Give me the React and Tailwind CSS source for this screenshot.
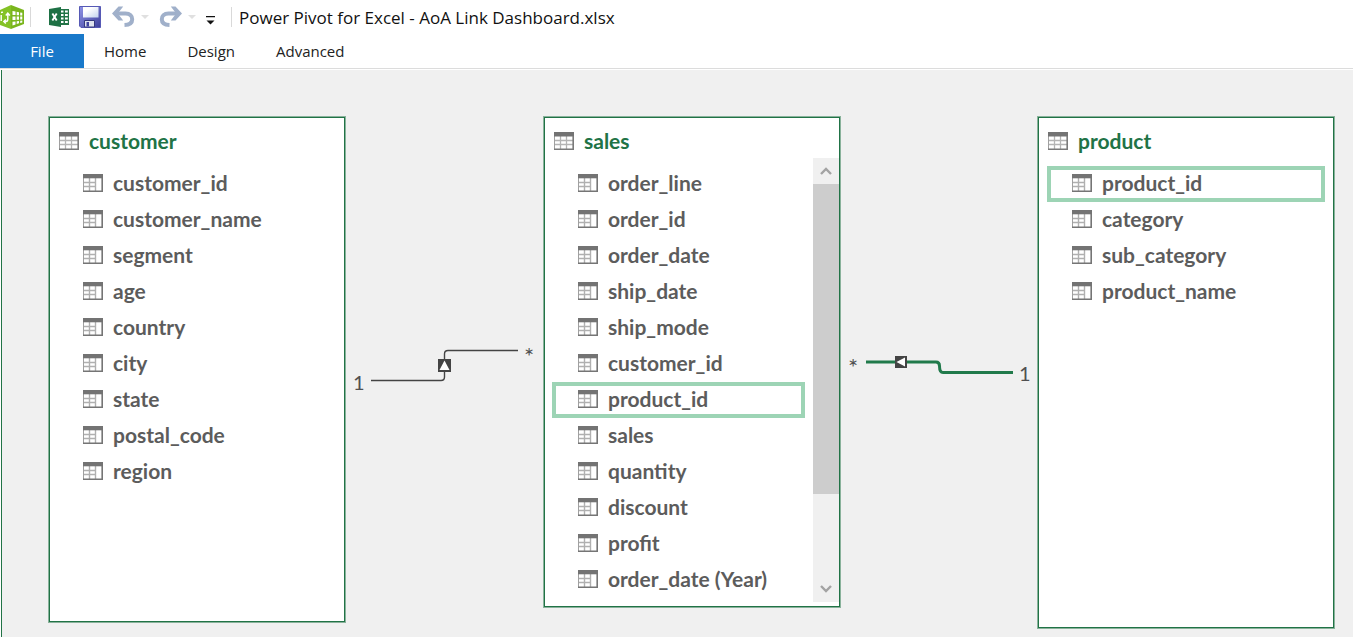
import React from 'react';

const tables = [
  {
    name: 'customer',
    box: 'left-[49px] h-[505px]',
    fields: ['customer_id', 'customer_name', 'segment', 'age', 'country', 'city', 'state', 'postal_code', 'region'],
  },
  {
    name: 'sales',
    box: 'left-[544px] h-[490px]',
    scroll: true,
    selected: 'product_id',
    fields: ['order_line', 'order_id', 'order_date', 'ship_date', 'ship_mode', 'customer_id', 'product_id', 'sales', 'quantity', 'discount', 'profit', 'order_date (Year)'],
  },
  {
    name: 'product',
    box: 'left-[1038px] h-[511px]',
    selected: 'product_id',
    fields: ['product_id', 'category', 'sub_category', 'product_name'],
  },
];

function TableIcon() {
  return (
    <svg width="20" height="18" viewBox="0 0 20 18" className="shrink-0" aria-hidden="true">
      <rect x="0.5" y="0.5" width="19" height="17" fill="#fff" stroke="#a0a0a0" />
      <path d="M1 8.5H19M1 12.5H19M6.5 4V17M12.5 4V17" stroke="#b4b4b4" strokeWidth="1.3" fill="none" />
      <path d="M0 0H20V4.5H0Z" fill="#737373" />
      <path d="M0 17.2H19.2V4" stroke="#7a7a7a" strokeWidth="1.6" fill="none" />
    </svg>
  );
}

function ColumnIcon() {
  return (
    <svg width="20" height="18" viewBox="0 0 20 18" className="shrink-0" aria-hidden="true">
      <rect x="0.5" y="0.5" width="19" height="17" fill="#fff" stroke="#a0a0a0" />
      <path d="M1 8.5H13M1 12.5H13M6.5 4V17M12.5 4V17" stroke="#b0b0b0" strokeWidth="1.4" fill="none" />
      <path d="M0 0H20V4.3H0Z" fill="#737373" />
      <path d="M0 17.2H19.2V4" stroke="#757575" strokeWidth="1.6" fill="none" />
    </svg>
  );
}

function Chevron({ d }) {
  return (
    <svg width="12" height="8" viewBox="0 0 12 8" fill="none" stroke="#a3a3a3" strokeWidth="2.4" aria-hidden="true">
      <path d={d} />
    </svg>
  );
}

function ScrollBar() {
  return (
    <div className="absolute right-0 top-10 bottom-1 flex w-[26px] flex-col bg-[#f0f0f0]">
      <button aria-label="Scroll up" className="flex h-[26px] items-center justify-center"><Chevron d="M1 7L6 2L11 7" /></button>
      <div className="h-[310px] bg-[#cdcdcd]" />
      <div className="grow" />
      <button aria-label="Scroll down" className="flex h-[26px] items-center justify-center"><Chevron d="M1 1L6 6L11 1" /></button>
    </div>
  );
}

function TableCard({ table }) {
  return (
    <section className={`absolute top-[47px] w-[296px] border border-[#217346] bg-white ring-1 ring-[#217346]/50 ${table.box}`}>
      <h2 className="flex h-12 items-center gap-2.5 pb-0.5 pl-[9px] text-[21px] leading-7 font-bold text-[#217346]">
        <TableIcon />
        {table.name}
      </h2>
      <ul className={table.scroll ? 'ml-[7px] mr-[34px]' : 'mx-2'}>
        {table.fields.map((f) => (
          <li
            key={f}
            className={`flex h-9 items-center gap-2.5 border-4 pb-0.5 text-[21px] leading-7 font-bold text-[#5c5c5c] ${table.scroll ? 'pl-[22px]' : 'pl-[21px]'} ${f === table.selected ? 'border-[#9dd4b5]' : 'border-transparent'}`}
          >
            <ColumnIcon />
            <span className="whitespace-nowrap">{f}</span>
          </li>
        ))}
      </ul>
      {table.scroll && <ScrollBar />}
    </section>
  );
}

function PivotLogo() {
  return (
    <svg width="24" height="24" viewBox="0 0 24 24" aria-hidden="true">
      <path d="M0 5L11 0V24L0 20Z" fill="#84c225" />
      <path d="M11 0L24 5V19L11 24Z" fill="#7ab51d" />
      <path d="M12.5 6L15.5 6.5V10H12.5ZM16.7 6.7L19 7.2V10.3H16.7ZM20.2 7.4L22.3 7.8V10.5H20.2ZM12.5 11.5H15.5V15H12.5ZM16.7 11.5H19V14.7H16.7ZM20.2 11.6H22.3V14.4H20.2ZM12.5 16.7L15.5 16.4V19.5L12.5 20.5ZM16.7 16.2L19 16V18.3L16.7 19ZM20.2 15.8L22.3 15.6V17.4L20.2 18Z" fill="#fff" />
      <path d="M1.2 10V16M1 7.5L3 7.1" stroke="#fff" strokeWidth="1.4" />
      <path d="M4 16.5H6Q7.8 16.5 7.8 14V9M5.8 10.5L7.8 8L9.8 10.5M5.8 14.5L3.8 16.5L5.8 18.5" stroke="#fff" strokeWidth="1.4" fill="none" />
    </svg>
  );
}

function ExcelLogo() {
  return (
    <svg width="21" height="20" viewBox="0 0 21 20" aria-hidden="true">
      <path d="M11 2H20V18H11Z" fill="#217346" />
      <path d="M12 3.5H14.5V5.5H12ZM16 3.5H18.8V5.5H16ZM12 7H14.5V9H12ZM16 7H18.8V9H16ZM12 10.5H14.5V12.5H12ZM16 10.5H18.8V12.5H16ZM12 14H14.5V16H12ZM16 14H18.8V16H16Z" fill="#fff" />
      <path d="M0 2L12 0V20L0 18Z" fill="#1e7145" />
      <path d="M3.4 6.5L7.7 13.5M7.7 6.5L3.4 13.5" stroke="#fff" strokeWidth="1.9" />
    </svg>
  );
}

function SaveIcon() {
  return (
    <svg width="23" height="23" viewBox="0 0 23 23" aria-hidden="true">
      <defs>
        <linearGradient id="disk" x1="0" y1="0" x2="1" y2="1">
          <stop offset="0" stopColor="#8f93e6" />
          <stop offset="1" stopColor="#3c3f9a" />
        </linearGradient>
        <linearGradient id="label" x1="0" y1="0" x2="1" y2="1">
          <stop offset="0.3" stopColor="#fff" />
          <stop offset="1" stopColor="#c3d3ee" />
        </linearGradient>
      </defs>
      <path d="M0.5 0.5H21.5V21.5H2L0.5 20Z" fill="url(#disk)" stroke="#5659b5" />
      <path d="M4 1H19.5V11.5H4Z" fill="url(#label)" />
      <path d="M5.5 14.5H15.5V21H5.5Z" fill="#dfe3ee" stroke="#34387e" />
      <path d="M7.5 16H10V20.500H7.5Z" fill="#4145a0" />
    </svg>
  );
}

function UndoArrow({ flip }) {
  return (
    <svg width="23" height="22" viewBox="0 0 23 22" className={flip ? '-scale-x-100' : ''} aria-hidden="true">
      <path d="M3 7.5H13.5C18 7.500 20.200 10.200 20.200 13.200C20.200 16.500 17.500 18.800 12.500 19" stroke="#a0b0ca" strokeWidth="4" fill="none" />
      <path d="M0 7.500L6.500 0.500H11.200L5.800 7.500L11.200 14.500H6.500Z" fill="#a0b0ca" />
    </svg>
  );
}

function Caret() {
  return (
    <svg width="8" height="4" viewBox="0 0 8 4" className="shrink-0" aria-hidden="true"><path d="M0 0H8L4 4Z" fill="#e0e0e0" /></svg>
  );
}

export default function App() {
  return (
    <div className="flex h-screen min-h-[637px] flex-col overflow-hidden bg-white font-['Lato',sans-serif]">
      <header className="flex h-[34px] shrink-0 items-center font-['Open_Sans','Noto_Sans',sans-serif]">
        <PivotLogo />
        <div className="ml-1.5 h-5 w-px bg-[#d9d9d9]" />
        <div className="ml-[18px] flex items-center">
          <button aria-label="Switch to workbook"><ExcelLogo /></button>
          <button aria-label="Save" className="ml-[9px]"><SaveIcon /></button>
          <button aria-label="Undo" className="ml-2.5 flex items-center gap-1.5"><UndoArrow /><Caret /></button>
          <button aria-label="Redo" className="ml-2.5 flex items-center gap-1.5"><UndoArrow flip /><Caret /></button>
          <button aria-label="Customize toolbar" className="ml-2.5">
            <svg width="9" height="9" viewBox="0 0 9 9" className="mt-1.5" aria-hidden="true"><path d="M0 0H9V1.3H0ZM0.5 4.5H8.5L4.5 8.5Z" fill="#111" /></svg>
          </button>
        </div>
        <div className="ml-4 h-5 w-px bg-[#d9d9d9]" />
        <h1 className="ml-[7px] whitespace-nowrap pt-0.5 text-[17px] text-[#111]">Power Pivot for Excel - AoA Link Dashboard.xlsx</h1>
      </header>
      <nav className="flex h-[35px] shrink-0 border-b border-[#dcdcdc] font-['Open_Sans','Noto_Sans',sans-serif] text-[15px] text-[#222]">
        <button className="w-[84px] bg-[#1979ca] text-white">File</button>
        <div className="ml-5 flex gap-[41px]">
          <button>Home</button>
          <button>Design</button>
          <button>Advanced</button>
        </div>
      </nav>
      <main className="relative ml-px mt-px grow border-l border-[#217346] bg-[#f0f0f0]">
        <div className="absolute inset-y-0 -left-0.5 right-0">
          {tables.map((t) => <TableCard key={t.name} table={t} />)}
          <svg className="absolute left-[370px] top-[270px]" width="150" height="50" viewBox="370 340 150 50" fill="none" aria-hidden="true">
            <path d="M371 380.5H441Q444.500 380.500 444.500 377V354Q444.500 350.500 448 350.500H518" stroke="#444" strokeWidth="1.4" />
            <path d="M438 359H451V372H438Z" fill="#444" />
            <path d="M444.500 360.500L449.500 370H439.500Z" fill="#fff" />
          </svg>
          <svg className="absolute left-[864px] top-[280px]" width="150" height="30" viewBox="864 350 150 30" fill="none" aria-hidden="true">
            <path d="M866 362H936Q939.500 362 939.500 366Q939.500 372.500 943 372.500H1013" stroke="#217a4b" strokeWidth="3" />
            <path d="M895 356H907V368H895Z" fill="#444" />
            <path d="M896.500 362L905 357.500V366.500Z" fill="#fff" />
          </svg>
          <span className="absolute left-[353px] top-[298px] text-xl text-[#505050]">1</span>
          <span className="absolute left-[524px] top-[270px] text-2xl text-[#505050]">*</span>
          <span className="absolute left-[848px] top-[281px] text-2xl text-[#505050]">*</span>
          <span className="absolute left-[1019px] top-[289px] text-xl text-[#505050]">1</span>
        </div>
      </main>
    </div>
  );
}
